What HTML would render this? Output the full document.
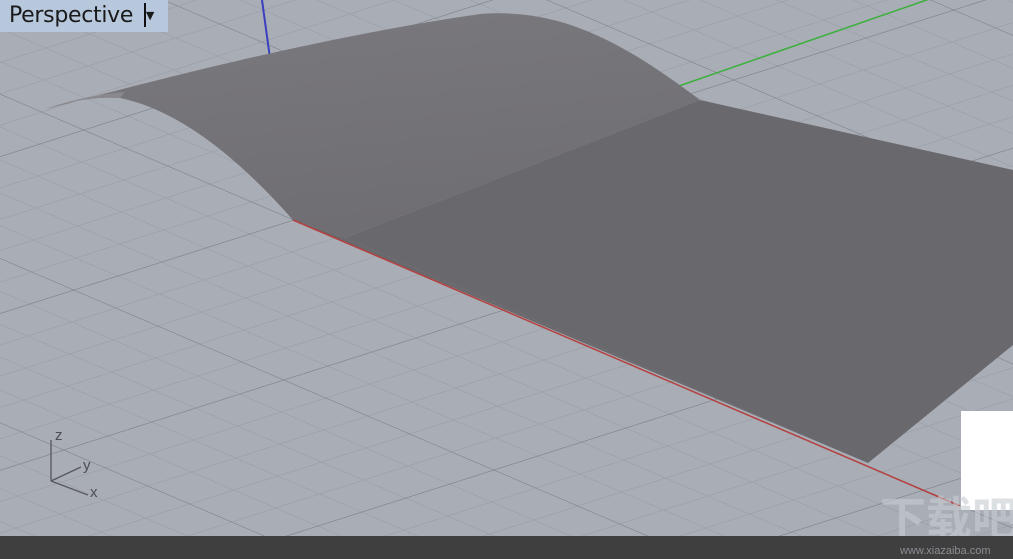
<!DOCTYPE html>
<html><head><meta charset="utf-8"><style>
html,body{margin:0;padding:0;width:1013px;height:559px;overflow:hidden;background:#a9adb5;font-family:"Liberation Sans",sans-serif}
svg{position:absolute;left:0;top:0}
#lbl{position:absolute;left:0;top:0;width:168px;height:32px;background:#b7c8dc;font-size:22px;color:#1a1a1a;line-height:32px;padding-left:9px;box-sizing:border-box;font-family:"DejaVu Sans","Liberation Sans",sans-serif;letter-spacing:-0.3px;white-space:nowrap;overflow:hidden}
</style></head><body>
<svg width="1013" height="559" viewBox="0 0 1013 559">
<defs>
<pattern id="mi" patternUnits="userSpaceOnUse" width="10" height="10" patternTransform="matrix(4.2,1.8,4.4,-1.4,293,220)">
<path d="M0,0 H10 M0,0 V10" stroke="#92969e" stroke-width="0.28" fill="none"/>
</pattern>
<pattern id="ma" patternUnits="userSpaceOnUse" width="50" height="50" patternTransform="matrix(4.2,1.8,4.4,-1.4,293,220)">
<path d="M0,0 H50 M0,0 V50" stroke="#7a7e85" stroke-width="0.35" fill="none"/>
</pattern>
<linearGradient id="cg" x1="0" y1="0" x2="0.3" y2="1">
<stop offset="0" stop-color="#7a797e"/><stop offset="1" stop-color="#6f6e73"/>
</linearGradient>
</defs>
<rect width="1013" height="559" fill="url(#mi)"/>
<rect width="1013" height="559" fill="url(#ma)"/>
<line x1="262" y1="0" x2="292" y2="218" stroke="#3a3fc0" stroke-width="2"/>
<line x1="293" y1="220" x2="1013" y2="-30" stroke="#3fb040" stroke-width="1.6"/>
<path d="M46,109 C120,90 300,40 480,14 C560,8 620,40 700,100 L345,238 L293,220 C240,160 180,110 120,98 C90,96 60,104 46,109 Z" fill="url(#cg)"/>
<path d="M46,109 C70,100 100,94 125,92 L120,98 C90,96 60,104 46,109Z" fill="#8a888c"/>
<path d="M345,238 L700,100 L1013,170 L1013,345 L868,463 Z" fill="#69686c"/>
<path d="M293,220 L345,238 L868,463 Z" fill="#69686c"/>
<line x1="293" y1="220" x2="960" y2="506" stroke="#b5403f" stroke-width="1.5"/>
<g stroke="#55585e" stroke-width="1.3" fill="none">
<line x1="51" y1="440" x2="51" y2="481"/><line x1="51" y1="481" x2="81" y2="467"/><line x1="51" y1="481" x2="88" y2="495"/></g>
<g font-family="Liberation Sans,sans-serif" font-size="15" fill="#4a4d53">
<text x="55" y="440">z</text><text x="83" y="470">y</text><text x="90" y="497">x</text></g>
<rect x="961" y="411" width="52" height="99" fill="#fff"/>
<text x="880" y="535" font-size="46" fill="#c8ccd2" opacity="0.6" font-family="Noto Sans CJK SC,sans-serif" font-weight="bold">下载吧</text>
<rect x="0" y="536" width="1013" height="23" fill="#3f3f3f"/>
<text x="900" y="554" font-size="11" fill="#8a8d92">www.xiazaiba.com</text>
</svg>
<div id="lbl">Perspective <span style="display:inline-block;width:2px;height:24px;background:#111;vertical-align:-5px;margin-left:4px"></span><span style="font-size:11px;vertical-align:3px">▼</span></div>
</body></html>
